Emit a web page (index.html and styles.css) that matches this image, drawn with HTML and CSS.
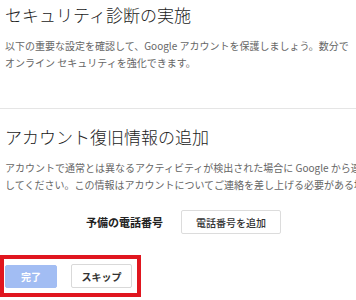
FILE: index.html
```html
<!DOCTYPE html>
<html lang="ja">
<head>
<meta charset="utf-8">
<link rel="stylesheet" href="styles.css">
</head>
<body>
<div class="page">
  <section class="section first">
    <h1 class="title">セキュリティ診断の実施</h1>
    <p class="desc">以下の重要な設定を確認して、Google アカウントを保護しましょう。数分で<br>オンライン セキュリティを強化できます。</p>
  </section>
  <hr class="divider">
  <section class="section second">
    <h2 class="title">アカウント復旧情報の追加</h2>
    <p class="desc">アカウントで通常とは異なるアクティビティが検出された場合に Google から連絡を受け取れるよう<br>してください。この情報はアカウントについてご連絡を差し上げる必要がある場合に使用されます。</p>
    <div class="phone-row">
      <span class="phone-label">予備の電話番号</span>
      <button class="btn btn-add" type="button">電話番号を追加</button>
    </div>
  </section>
  <div class="actions">
    <button class="btn btn-done" type="button" disabled>完了</button>
    <button class="btn btn-skip" type="button">スキップ</button>
  </div>
</div>
</body>
</html>
```
FILE: styles.css
```css
html, body {
  margin: 0;
  padding: 0;
  background: #ffffff;
}
body {
  width: 356px;
  height: 300px;
  overflow: hidden;
  font-family: "Noto Sans CJK JP", "Noto Sans", sans-serif;
  color: #222;
}
.page {
  width: 356px;
}
.section {
  padding: 0 0 0 5px;
}
.first {
  padding-top: 5px;
}
.title {
  margin: 0;
  font-size: 17px;
  line-height: 20px;
  font-weight: 300;
  color: #222;
  white-space: nowrap;
}
.desc {
  margin: 12px 0 0 0;
  font-size: 10px;
  line-height: 17px;
  color: #666;
  white-space: nowrap;
}
.divider {
  margin: 37px 0 0 0;
  border: 0;
  border-top: 1px solid #e5e5e5;
  height: 0;
}
.second {
  padding-top: 18px;
}
.phone-row {
  display: flex;
  align-items: center;
  margin-top: 17px;
  padding-left: 78px;
  gap: 18px;
}
.phone-label {
  font-size: 11px;
  font-weight: 700;
  color: #222;
  width: 80px;
  text-align: right;
  white-space: nowrap;
}
.btn {
  font-family: "Noto Sans CJK JP", "Noto Sans", sans-serif;
  font-size: 10px;
  box-sizing: border-box;
  border-radius: 2px;
  cursor: pointer;
  padding: 0;
}
.btn-add {
  width: 100px;
  height: 24px;
  background: #fff;
  border: 1px solid #dcdcdc;
  color: #333;
  font-weight: 500;
}
.actions {
  margin-top: 21px;
  width: 141px;
  height: 42px;
  box-sizing: border-box;
  border: 4px solid #e0161f;
  display: flex;
  align-items: center;
  gap: 14px;
  padding: 0 0 0 1px;
}
.btn-done {
  width: 52px;
  height: 23px;
  background: #a2bdf3;
  border: 1px solid #a2bdf3;
  color: #fff;
  font-weight: 700;
}
.btn-skip {
  width: 61px;
  height: 24px;
  background: #fff;
  border: 1px solid #d9d9d9;
  color: #333;
  font-weight: 700;
}
```
